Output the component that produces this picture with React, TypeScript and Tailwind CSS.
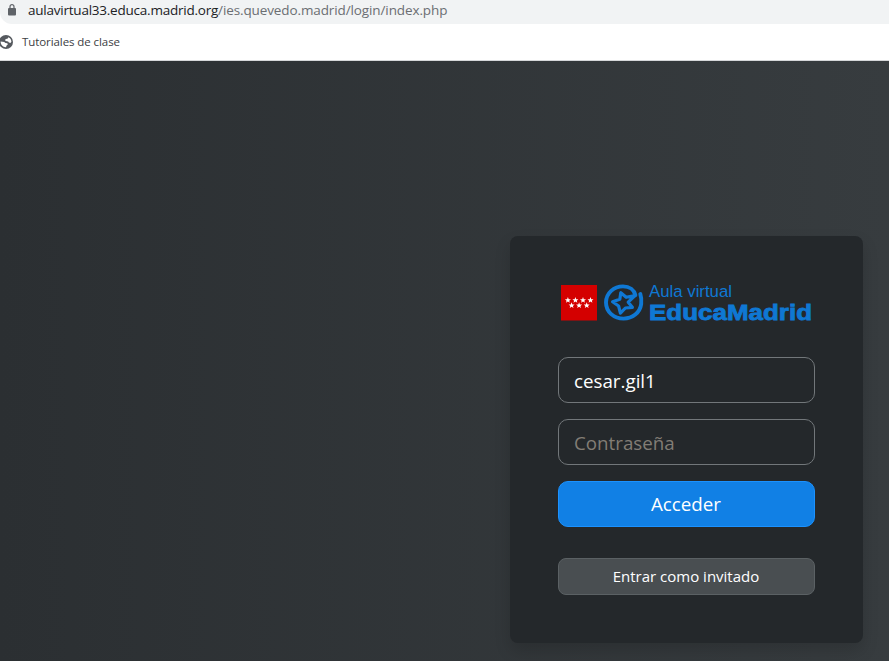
import React from "react";

function LockIcon() {
  return (
    <svg width="8" height="12" viewBox="0 0 8 12" className="block" fill="none">
      <path d="M2 5V2.7a2 2 0 0 1 4 0V5" stroke="#5f6368" strokeWidth="1.2" />
      <rect x="0" y="4" width="8" height="7.5" rx="1" fill="#5f6368" />
    </svg>
  );
}

function GlobeIcon() {
  return (
    <svg width="14" height="14" viewBox="0 0 14 14" className="block shrink-0">
      <circle cx="7" cy="7" r="7" fill="#565a5f" />
      <path
        d="M9.3 2.2 C11.3 3 12.4 4.8 12.4 6.8 L11.4 8 9.9 7.6 9.1 6.4 6.8 6.1 5.9 5 7 3.9 8.8 3.6Z"
        fill="#fff"
      />
      <path
        d="M1.6 6.6 5.2 6.9 6.5 8 8.4 8.3 8.8 9.5 7.6 10.4 7 12.3 C4 12.4 1.6 10 1.6 6.6Z"
        fill="#fff"
      />
    </svg>
  );
}

const stars = [
  [9.9, 19.2],
  [17.4, 19.2],
  [25, 19.2],
  [32.5, 19.2],
  [13.6, 24.4],
  [21.1, 24.4],
  [28.7, 24.4],
];

function Logo() {
  return (
    <svg width="257" height="48" viewBox="0 0 257 48" className="block shrink-0" role="img" aria-label="Aula virtual EducaMadrid">
      <rect x="3" y="4" width="36" height="35.5" fill="#d40000" />
      {stars.map(([x, y]) => (
        <path
          key={`${x}-${y}`}
          transform={`translate(${x} ${y})`}
          d="M0-3.1 .8-1 3-.95 1.3.5 1.9 2.6 0 1.4-1.9 2.6-1.3.5-3-.95-.8-1Z"
          fill="#fff"
        />
      ))}
      <g fill="none" stroke="#0f78d4" strokeLinecap="round" strokeLinejoin="round">
        <path
          d="M82.3 13 C83.5 16.5 83.6 19.5 83.2 23 C82 31.8 74.5 37.6 65.6 37.6 C56 37.6 48 31 48 21.5 C48 12 56 5.4 65 5.4 C71.5 5.4 76.2 9 77.4 14.2"
          strokeWidth="3.9"
        />
        <path
          d="M77 14.6 L68.2 16.3 62.8 11.8 61.8 18.2 54.6 20.8 60.6 25 62.4 32.2 67.4 27 74.4 26.3 70.2 21.2Z"
          strokeWidth="3.2"
        />
      </g>
      <text x="91" y="16" fontSize="16.3" textLength="83" lengthAdjust="spacingAndGlyphs" fill="#0f78d4" fontFamily="Liberation Sans, Arial, sans-serif">
        Aula virtual
      </text>
      <text x="91" y="39" fontSize="21.5" fontWeight="700" textLength="163" lengthAdjust="spacingAndGlyphs" fill="#0f78d4" stroke="#0f78d4" strokeWidth="0.8" fontFamily="Liberation Sans, Arial, sans-serif">
        EducaMadrid
      </text>
    </svg>
  );
}

export default function App() {
  return (
    <div className="flex h-[661px] w-[889px] flex-col overflow-hidden bg-white font-['Open_Sans','Noto_Sans',sans-serif]">
      <header className="h-[61px] shrink-0 border-b border-[#d5d7d9] bg-white">
        <div className="flex h-6 items-start rounded-bl-[12px] bg-[#f1f3f4] pl-2 text-[#6b6e72]">
          <div className="mt-1 w-5">
            <LockIcon />
          </div>
          <p className="whitespace-nowrap text-[13.5px] leading-[21px] tracking-[-0.11px]">
            <span className="tracking-[-0.23px] text-[#202124]">aulavirtual33.educa.madrid.org</span>/ies.quevedo.madrid/login/index.php
          </p>
        </div>
        <div className="-ml-px flex h-9 items-center">
          <GlobeIcon />
          <span className="ml-[9px] text-[11.5px] leading-4 tracking-[-0.08px] text-[#3c4043]">Tutoriales de clase</span>
        </div>
      </header>
      <main className="flex flex-1 justify-end bg-linear-to-r from-[#2b2f32] to-[#373c3f] pr-[26px] pt-[175px]">
        <form
          className="flex h-[407px] w-[353px] flex-col rounded-lg bg-[#24282b] px-12 pt-[45px] shadow-[0_8px_16px_rgba(0,0,0,0.15)]"
          onSubmit={(e) => e.preventDefault()}
        >
          <Logo />
          <input
            className="mt-7 h-[46px] w-full rounded-[10px] border border-[#72777a] bg-transparent px-[15px] text-[18.75px] text-white outline-none"
            defaultValue="cesar.gil1"
            spellCheck={false}
          />
          <input
            className="mt-4 h-[46px] w-full rounded-[10px] border border-[#72777a] bg-transparent px-[15px] text-[18.75px] text-white outline-none placeholder:text-[#827d75]"
            type="password"
            placeholder="Contraseña"
          />
          <button className="mt-4 h-[46px] w-full rounded-[10px] border border-[#1b92ff] bg-[#1180e5] pr-px text-[18.75px] leading-7 text-white">
            Acceder
          </button>
          <button
            type="button"
            className="mt-[31px] h-[37px] w-full rounded-lg border border-[#5b6164] bg-[#494e51] pb-[2px] pr-px text-[15px] leading-5 text-white"
          >
            Entrar como invitado
          </button>
        </form>
      </main>
    </div>
  );
}
